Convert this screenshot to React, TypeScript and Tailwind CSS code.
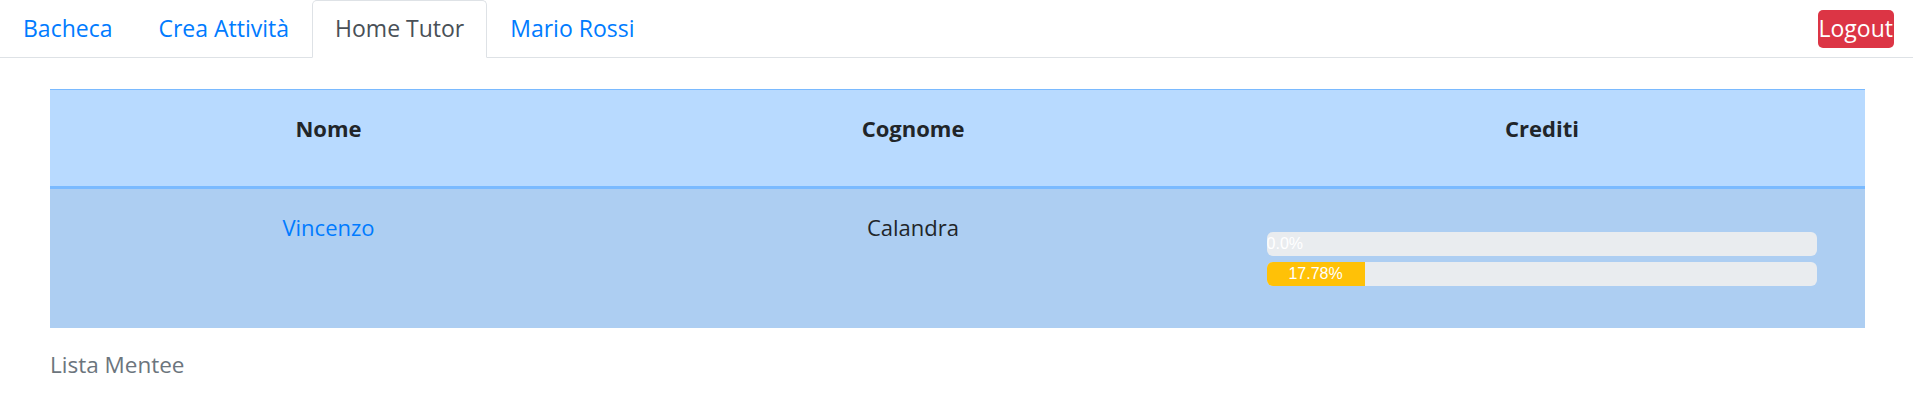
import React from 'react';

type Mentee = {
  nome: string;
  cognome: string;
  crediti: number[];
};

const MENTEES: Mentee[] = [{ nome: 'Vincenzo', cognome: 'Calandra', crediti: [0, 17.78] }];

const NAV = [
  { label: 'Bacheca', active: false },
  { label: 'Crea Attività', active: false },
  { label: 'Home Tutor', active: true },
  { label: 'Mario Rossi', active: false },
];

function ProgressBar({ value, fill }: { value: number; fill: boolean }) {
  const label = value === 0 ? '0.0%' : `${value}%`;
  return (
    <div className="flex h-[24px] w-full overflow-hidden rounded-[6px] bg-[#e9ecef] font-['Liberation_Sans',Arial,sans-serif] text-[16px] leading-[24px] text-white">
      {fill ? (
        <div className="flex items-center justify-center bg-[#ffc107]" style={{ width: `${value}%` }}>
          {label}
        </div>
      ) : (
        <span>{label}</span>
      )}
    </div>
  );
}

export default function App() {
  return (
    <div className="min-h-[407px] bg-white font-['Open_Sans',sans-serif] text-[22px] leading-[33px] text-[#212529]">
      <nav className="flex items-center border-b border-[#dee2e6]">
        <ul className="flex">
          {NAV.map((item) => (
            <li key={item.label} className="-mb-px">
              <a
                href="#"
                className={
                  item.active
                    ? 'block rounded-t-[5px] border border-[#dee2e6] border-b-white bg-white px-[22px] pb-[12px] pt-[11px] text-[23px] text-[#495057]'
                    : 'block border border-transparent px-[22px] pb-[12px] pt-[11px] text-[23px] text-[#007bff]'
                }
              >
                {item.label}
              </a>
            </li>
          ))}
        </ul>
        <button className="ml-auto mr-[19px] h-[38px] rounded-[5px] bg-[#dc3545] px-[1px] text-[23px] leading-[33px] text-white">
          Logout
        </button>
      </nav>

      <div className="ml-[50px] mr-[48px] mt-[31px]">
        <table className="w-full table-fixed border-collapse">
          <caption className="caption-bottom pt-[20px] text-left text-[22.5px] text-[#6c757d]">Lista Mentee</caption>
          <thead>
            <tr className="bg-[#b8daff]">
              <th className="h-[98px] w-[557px] border-t border-b-[3px] border-[#7abaff] pt-[22px] align-top font-bold">
                Nome
              </th>
              <th className="h-[98px] w-[612px] border-t border-b-[3px] border-[#7abaff] pt-[22px] align-top font-bold">
                Cognome
              </th>
              <th className="h-[98px] border-t border-b-[3px] border-[#7abaff] pt-[22px] align-top font-bold">
                Crediti
              </th>
            </tr>
          </thead>
          <tbody>
            {MENTEES.map((m) => (
              <tr key={m.nome} className="h-[140px] bg-[#adcef2]">
                <td className="pt-[22px] text-center align-top">
                  <a href="#" className="text-[#007bff]">
                    {m.nome}
                  </a>
                </td>
                <td className="pt-[22px] text-center align-top">{m.cognome}</td>
                <td className="px-[17px] pt-[22px] align-top">
                  <div className="mx-auto mt-[21px] flex w-[90%] flex-col gap-[6px]">
                    {m.crediti.map((c, i) => (
                      <ProgressBar key={i} value={c} fill={c > 0} />
                    ))}
                  </div>
                </td>
              </tr>
            ))}
          </tbody>
        </table>
      </div>
    </div>
  );
}
